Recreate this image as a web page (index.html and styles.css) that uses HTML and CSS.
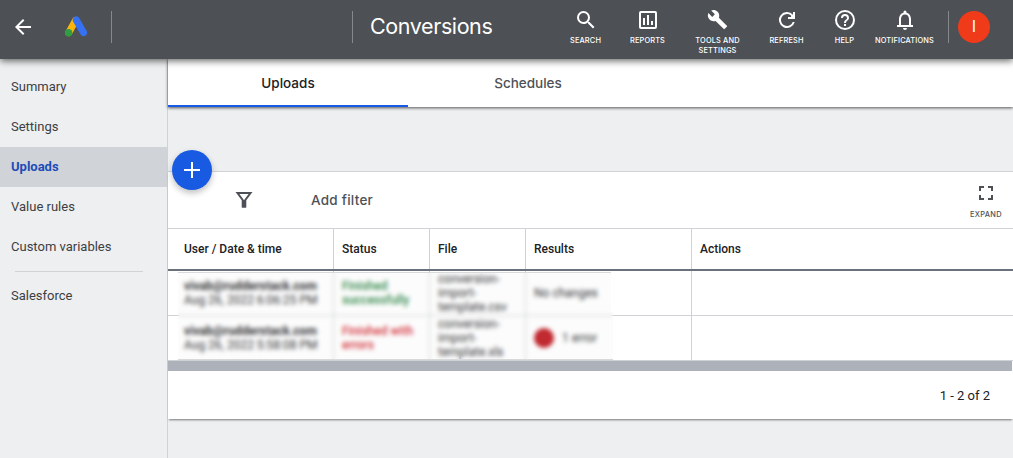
FILE: index.html
```html
<!DOCTYPE html>
<html lang="en">
<head>
<meta charset="utf-8">
<title>Conversions</title>
<link rel="stylesheet" href="styles.css">
</head>
<body>
<header class="topbar">
  <svg class="back" viewBox="0 0 24 24" width="24" height="24"><path d="M20 11H7.8l5.6-5.6L12 4l-8 8 8 8 1.4-1.4L7.8 13H20z" fill="#fff"/></svg>
  <svg class="logo" width="24" height="22" viewBox="0 0 24 22"><path d="M11.6 4.3 4.8 16.6" stroke="#fbb40c" stroke-width="7" stroke-linecap="round"/><path d="M12.3 4 19.5 16.6" stroke="#3571f2" stroke-width="7" stroke-linecap="round"/><circle cx="4.6" cy="16.7" r="3.7" fill="#2f9e41"/></svg>
  <span class="rule rule-logo"></span>
  <span class="rule rule-title"></span>
  <h1 class="title">Conversions</h1>
  <nav class="tools">
    <a class="tool"><svg viewBox="0 0 24 24"><path d="M15.500 14h-.79l-.28-.27A6.470 6.470 0 0 0 16 9.500 6.500 6.500 0 1 0 9.500 16c1.610 0 3.090-.59 4.230-1.570l.27.28v.79l5 4.990L20.490 19zm-6 0a4.500 4.500 0 1 1 0-9 4.500 4.500 0 0 1 0 9z"/></svg><span class="label">SEARCH</span></a>
    <a class="tool"><svg viewBox="0 0 24 24"><path d="M19 3H5a2 2 0 0 0-2 2v14c0 1.100.9 2 2 2h14a2 2 0 0 0 2-2V5a2 2 0 0 0-2-2zm0 16H5V5h14zM7 10h2v7H7zm4-3h2v10h-2zm4 6h2v4h-2z"/></svg><span class="label">REPORTS</span></a>
    <a class="tool"><svg viewBox="0 0 24 24"><path d="M22.700 19l-9.100-9.100c.9-2.300.4-5-1.500-6.900-2-2-5-2.400-7.400-1.300L9 6 6 9 1.600 4.700C.4 7.100.9 10.100 2.900 12.100c1.900 1.900 4.600 2.400 6.900 1.500l9.100 9.100c.4.4 1 .4 1.400 0l2.300-2.300c.5-.4.5-1.100.1-1.400z"/></svg><span class="label">TOOLS AND<br>SETTINGS</span></a>
    <a class="tool"><svg viewBox="0 0 24 24"><path d="M18 6.700A8 8 0 1 0 19.730 14h-2.080A6 6 0 1 1 12 6c1.660 0 3.140.69 4.220 1.780L16 9h-3v2h7V4h-2z"/></svg><span class="label">REFRESH</span></a>
    <a class="tool"><svg viewBox="0 0 24 24"><path d="M11 18h2v-2h-2zm1-16a10 10 0 1 0 0 20 10 10 0 0 0 0-20zm0 18a8 8 0 1 1 0-16 8 8 0 0 1 0 16zm0-14a4 4 0 0 0-4 4h2c0-1.100.9-2 2-2s2 .9 2 2c0 2-3 1.750-3 5h2c0-2.250 3-2.500 3-5a4 4 0 0 0-4-4z"/></svg><span class="label">HELP</span></a>
    <a class="tool"><svg viewBox="0 0 24 24"><path d="M18 17v-6c0-3.070-1.630-5.640-4.500-6.320V4a1.500 1.500 0 0 0-3 0v.68C7.640 5.360 6 7.920 6 11v6H4v2h16v-2zm-2 0H8v-6c0-2.480 1.510-4.500 4-4.500s4 2.020 4 4.500zm-4 5a2 2 0 0 0 2-2h-4c0 1.100.9 2 2 2z"/></svg><span class="label">NOTIFICATIONS</span></a>
  </nav>
  <span class="rule rule-user"></span>
  <span class="avatar">I</span>
</header>
<div class="layout">
  <aside class="sidebar">
    <a class="item">Summary</a>
    <a class="item">Settings</a>
    <a class="item active">Uploads</a>
    <a class="item">Value rules</a>
    <a class="item">Custom variables</a>
    <hr class="divider">
    <a class="item">Salesforce</a>
  </aside>
  <main class="main">
    <div class="tabs"><a class="tab selected">Uploads</a><a class="tab">Schedules</a></div>
    <section class="panel">
      <button class="add" aria-label="Add"><svg width="16" height="16" viewBox="0 0 16 16"><path d="M7 0h2v7h7v2H9v7H7V9H0V7h7z" fill="#fff"/></svg></button>
      <div class="filterbar">
        <svg class="funnel" width="18" height="18" viewBox="0 0 18 18"><path d="M2.500 2h13L10.300 9v6.500H7.700V9z" fill="none" stroke="#4d5156" stroke-width="2"/><path d="M7 9h4v7.500H7z" fill="#4d5156"/></svg>
        <span class="filter-text">Add filter</span>
        <a class="expand"><svg width="14" height="14" viewBox="0 0 14 14"><path d="M1 5V1h4M9 1h4v4M13 9v4H9M5 13H1V9" fill="none" stroke="#4d5156" stroke-width="2"/></svg><span class="expand-label">EXPAND</span></a>
      </div>
      <div class="table">
        <div class="row head"><div>User / Date &amp; time</div><div>Status</div><div>File</div><div>Results</div><div>Actions</div></div>
        <div class="row"><div><b>vivab@rudderstack.com</b><span class="date">Aug 26, 2022 6:06:25 PM</span></div><div class="ok">Finished successfully</div><div class="file">conversion-import-template.csv</div><div>No changes</div><div></div></div>
        <div class="row"><div><b>vivab@rudderstack.com</b><span class="date">Aug 26, 2022 5:58:08 PM</span></div><div class="bad">Finished with errors</div><div class="file">conversion-import-template.xls</div><div class="error"><i class="dot"></i>1 error</div><div></div></div>
        <div class="redaction"></div>
      </div>
      <div class="scrollbar"></div>
      <div class="pager">1 - 2 of 2</div>
    </section>
  </main>
</div>
</body>
</html>
```
FILE: styles.css
```css
* { box-sizing: border-box; }
body { margin: 0; height: 458px; overflow: hidden; background: #eeeff1; font-family: Roboto, sans-serif; color: #202124; }
.topbar { position: relative; z-index: 3; display: flex; height: 59px; background: #4d5055; color: #fff; box-shadow: 0 2px 7px rgba(0,0,0,.6); }
.back { margin: 15px 0 0 11px; }
.logo { margin: 16px 0 0 29px; }
.rule { width: 1px; height: 32px; margin-top: 11px; background: #85888c; }
.rule-logo { margin-left: 23px; }
.rule-title { margin-left: 240px; }
.title { width: 201px; margin: 10px 0 0 17px; font: 400 21.5px/32px Inter, sans-serif; letter-spacing: -.4px; white-space: nowrap; }
.tools { display: grid; grid-template-columns: 62px 62px 78px 60px 56px 64px; margin-left: -16.5px; }
.tool { display: flex; flex-direction: column; align-items: center; padding-top: 8px; }
.tool svg { width: 24px; height: 24px; fill: #fff; flex: none; }
.tool:nth-child(3) svg { width: 21px; height: 21px; margin: 1px 0 2px; }
.label { margin-top: 4px; font: 500 7.4px/10px Inter, sans-serif; letter-spacing: .15px; text-align: center; white-space: nowrap; }
.rule-user { margin-left: 11.5px; }
.avatar { width: 32px; height: 32px; margin: 11px 0 0 9px; border-radius: 50%; background: #ef3b1a; font-size: 16px; line-height: 32px; text-align: center; }
.layout { display: flex; height: 399px; }
.sidebar { width: 168px; padding-top: 8px; border-right: 1px solid #d0d3d6; flex: none; }
.item { display: block; height: 40px; padding-left: 11px; font-size: 13px; line-height: 40px; color: #3c4043; }
.active { background: #d0d3d8; color: #1d4db8; font-weight: 700; }
.divider { width: 128px; margin: 4px 0 4px 15px; border: 0; border-top: 1px solid #d0d2d5; }
.main { flex: 1; }
.tabs { position: relative; display: flex; height: 48px; background: #fff; box-shadow: 0 1px 3px rgba(0,0,0,.65); }
.tab { width: 240px; height: 48px; text-align: center; color: #4d5156; font: 500 13.5px/48px Inter, sans-serif; letter-spacing: 0; }
.selected { border-bottom: 2px solid #185be2; color: #202124; }
.panel { position: relative; height: 248px; margin-top: 64px; border-top: 1px solid #d0d3d6; background: #fff; box-shadow: 0 2px 2px -1px rgba(0,0,0,.5); }
.add { position: absolute; left: 4px; top: -22px; display: flex; align-items: center; justify-content: center; width: 40px; height: 40px; padding: 0; border: 0; border-radius: 50%; background: #185be2; box-shadow: 0 3px 6px rgba(0,0,0,.25); }
.filterbar { display: flex; height: 57px; border-bottom: 1px solid #d0d3d6; color: #4d5156; }
.funnel { margin: 19px 0 0 67px; }
.filter-text { margin-left: 58px; font: 500 13.5px/56px Inter, sans-serif; letter-spacing: .25px; }
.expand { display: flex; flex-direction: column; align-items: center; width: 54px; margin-left: auto; padding-top: 14px; }
.expand-label { margin-top: 10px; font: 500 7.4px/10px Inter, sans-serif; letter-spacing: .3px; }
.table { position: relative; }
.row { display: grid; grid-template-columns: 166px 96px 96px 166px 1fr; height: 45px; border-bottom: 1px solid #d0d3d6; font-size: 12px; line-height: 14px; }
.row > div { display: flex; flex-direction: column; justify-content: center; padding-left: 8px; border-right: 1px solid #d0d3d6; min-width: 0; }
.row > div:first-child { padding-left: 16px; }
.row > div:last-child { border-right: 0; }
.head { height: 42px; border-bottom: 2px solid #6b717a; font-weight: 500; }
.row b { letter-spacing: .1px; }
.date { white-space: nowrap; }
.row .ok { color: #188038; padding-right: 8px; font-weight: 500; }
.row .bad { color: #d3222a; padding-right: 8px; font-weight: 500; }
.row .error { flex-direction: row; align-items: center; justify-content: flex-start; gap: 8px; }
.dot { width: 20px; height: 20px; border-radius: 50%; background: #bc1018; }
.redaction { position: absolute; left: 10px; top: 43px; width: 435px; height: 88px; border: solid #d8d9db; border-width: 1px 0; background: rgba(230,230,230,.12); backdrop-filter: blur(1.9px); clip-path: polygon(0 0, 433px 0, 433px 40px, 100% 40px, 100% 100%, 0 100%); }
.scrollbar { width: 844px; height: 10px; background: #adb2ba; }
.pager { padding-right: 23px; text-align: right; font-size: 13px; line-height: 49px; }
```
